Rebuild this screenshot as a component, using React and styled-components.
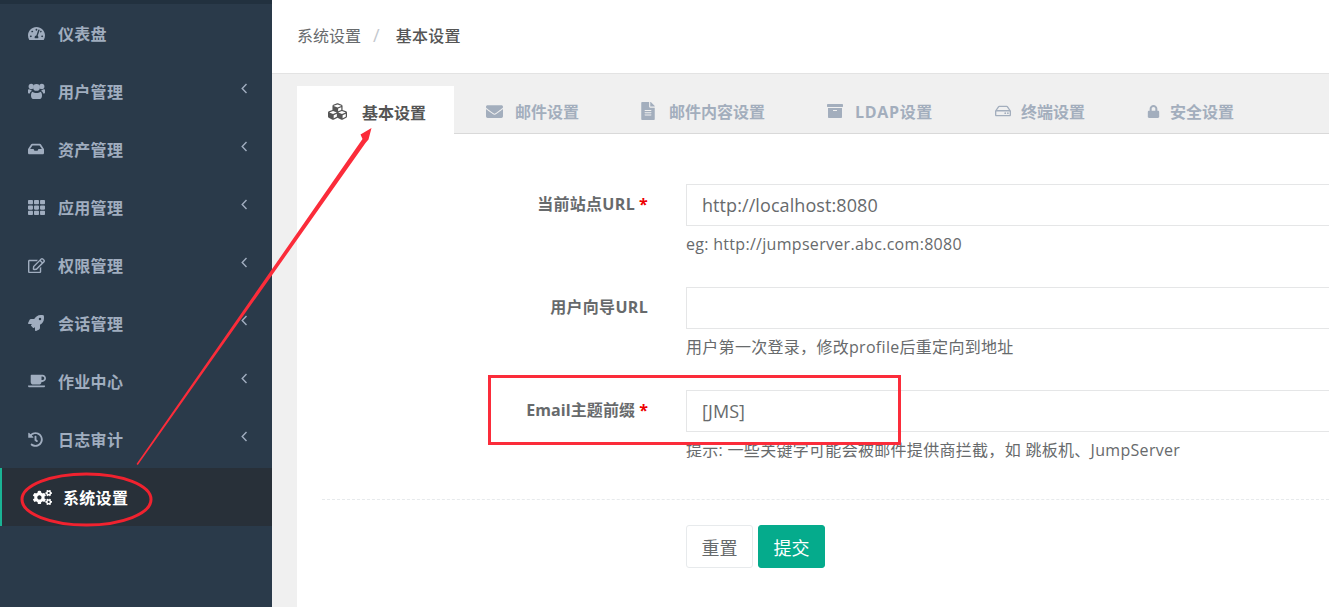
import styled, { createGlobalStyle } from "styled-components";
import {
  FaTachometerAlt, FaInbox, FaTh, FaRegEdit, FaRocket, FaCoffee, FaHistory, FaCogs,
  FaCubes, FaEnvelope, FaFileAlt, FaArchive, FaRegHdd, FaLock,
} from "react-icons/fa";

const GlobalStyle = createGlobalStyle`
  html, body {
    margin: 0;
    padding: 0;
    background: #f0f0f0;
  }
  body {
    font-family: "Open Sans", "Noto Sans CJK SC", sans-serif;
    color: #676a6c;
  }
  * { box-sizing: border-box; }
`;

const Page = styled.div`
  position: relative;
  display: flex;
  width: 1329px;
  height: 607px;
  overflow: hidden;
`;

const Sidebar = styled.nav`
  flex: 0 0 272px;
  background: #2a3a4a;
  border-top: 4px solid #22313f;
`;

const NavRow = styled.div`
  display: flex;
  align-items: center;
  height: 58px;
  padding-left: ${(p) => (p.$active ? "31px" : "28px")};
  border-left: ${(p) => (p.$active ? "2px solid #1ab394" : "none")};
  background: ${(p) => (p.$active ? "#283039" : "transparent")};
  color: ${(p) => (p.$active ? "#ffffff" : "#a0adbf")};
  font-size: 16px;
  font-weight: 700;
`;

const NavIcon = styled.span`
  display: flex;
  align-items: center;
  width: 30px;
  font-size: ${(p) => p.$size || 17}px;
`;

const NavLabel = styled.span`
  flex: 1;
  letter-spacing: 0.3px;
`;

const Chevron = styled.svg`
  width: 7px;
  height: 11px;
  margin: -6px 24px 0 0;
  fill: none;
  stroke: #a0adbf;
  stroke-width: 1.4;
`;

const Main = styled.main`
  flex: 1;
  min-width: 0;
`;

const Header = styled.header`
  display: flex;
  align-items: center;
  height: 74px;
  padding: 0 25px 4px;
  background: #fff;
  border-bottom: 1px solid #e3e3e3;
  font-size: 16px;
`;

const Crumb = styled.span`
  font-weight: ${(p) => (p.$strong ? 500 : 400)};
  color: ${(p) => (p.$strong ? "#555" : "#676a6c")};
  letter-spacing: ${(p) => (p.$strong ? "0.25px" : "0")};
`;

const Slash = styled.span`
  margin: 0 16px 0 12px;
  font-size: 18px;
  color: #c4c8ce;
`;

const Content = styled.div`
  padding: 12px 0 0 25px;
`;

const Tabs = styled.div`
  display: flex;
  height: 48px;
  border-bottom: 1px solid #d9d9d9;
`;

const Tab = styled.div`
  display: flex;
  align-items: center;
  height: ${(p) => (p.$active ? "48px" : "47px")};
  padding: ${(p) => (p.$active ? "3px 28px 0 31px" : "3px 30px 0 32px")};
  background: ${(p) => (p.$active ? "#fff" : "transparent")};
  color: ${(p) => (p.$active ? "#555" : "#a3aebd")};
  font-size: 16px;
  font-weight: 700;
`;

const TabIcon = styled.span`
  display: flex;
  margin-left: ${(p) => p.$shift || 0}px;
  margin-right: ${(p) => p.$gap}px;
  font-size: ${(p) => p.$size}px;
`;

const TabLabel = styled.span`
  letter-spacing: ${(p) => p.$spacing || 0}px;
`;

const Panel = styled.div`
  height: 473px;
  margin-right: -20px;
  padding: 50px 0 0 25px;
  background: #fff;
`;

const FormRow = styled.div`
  display: flex;
  height: 103px;
`;

const Label = styled.label`
  flex: 0 0 326px;
  padding-top: 8px;
  text-align: right;
  font-size: 16px;
  font-weight: 700;
  line-height: 24px;
  letter-spacing: ${(p) => p.$spacing}px;
`;

const Star = styled.span`
  margin-left: 4px;
  color: #ed0000;
`;

const Field = styled.div`
  flex: 1;
  margin-left: 38px;
`;

const Input = styled.div`
  height: 42px;
  padding: 0 15px;
  border: 1px solid #e5e6e7;
  font-size: 18px;
  line-height: 40px;
  letter-spacing: 0.08px;
`;

const Help = styled.div`
  margin-top: 6px;
  font-size: 16px;
  line-height: 24px;
  letter-spacing: 0.3px;
`;

const Divider = styled.div`
  margin-top: 6px;
  border-top: 1px dashed #e7eaec;
`;

const Actions = styled.div`
  display: flex;
  gap: 5px;
  margin: 25px 0 0 364px;
`;

const Button = styled.button`
  width: 67px;
  height: 43px;
  padding: 0;
  border: 1px solid ${(p) => (p.$primary ? "#05ab8c" : "#e7eaec")};
  border-radius: 3px;
  background: ${(p) => (p.$primary ? "#05ab8c" : "#fff")};
  color: ${(p) => (p.$primary ? "#fff" : "#676a6c")};
  font-family: inherit;
  font-size: 18px;
`;

const Annotations = styled.svg`
  position: absolute;
  inset: 0;
  pointer-events: none;
`;

// three heads over three shoulders, the set has no icon of this shape
const GroupIcon = () => (
  <svg width="17" height="16" viewBox="0 0 17 16" fill="currentColor">
    <circle cx="3.2" cy="3.4" r="2.6" />
    <circle cx="13.8" cy="3.4" r="2.6" />
    <circle cx="8.5" cy="4.4" r="3.4" />
    <path d="M0 7.2C0 6.4.6 6 1.4 6.2c.6.4 1.2.6 2 .5-.1.5.1 1 .3 1.4C2.6 8.500 2 9.500 1.800 10.500H.8C.3 10.500 0 10.200 0 9.700Z" />
    <path d="M17 7.200C17 6.400 16.400 6 15.600 6.200c-.6.4-1.200.6-2 .5.1.5-.1 1-.3 1.400 1.100.4 1.700 1.400 1.900 2.400h1c.5 0 .8-.3.8-.8Z" />
    <path d="M4.800 8.700c.9 1.100 2.300 1.400 3.700 1.400s2.800-.3 3.700-1.400c1.300.3 1.800 2 1.800 3.800 0 1.900-.8 3.500-2.200 3.500H5.200C3.800 16 3 14.400 3 12.500c0-1.800.5-3.500 1.800-3.800Z" />
  </svg>
);

const navItems = [
  { label: "仪表盘", icon: <FaTachometerAlt /> },
  { label: "用户管理", icon: <GroupIcon />, more: true },
  { label: "资产管理", icon: <FaInbox />, size: 16, more: true },
  { label: "应用管理", icon: <FaTh />, more: true },
  { label: "权限管理", icon: <FaRegEdit />, more: true },
  { label: "会话管理", icon: <FaRocket />, size: 16, more: true },
  { label: "作业中心", icon: <FaCoffee />, size: 18, more: true },
  { label: "日志审计", icon: <FaHistory />, size: 15, more: true },
  { label: "系统设置", icon: <FaCogs />, size: 19, active: true },
];

const tabs = [
  { label: "基本设置", icon: <FaCubes />, size: 19, gap: 15, active: true },
  { label: "邮件设置", icon: <FaEnvelope />, size: 17, gap: 12 },
  { label: "邮件内容设置", icon: <FaFileAlt />, size: 18, gap: 12, shift: -2 },
  { label: "LDAP设置", icon: <FaArchive />, size: 16, gap: 12, spacing: 0.67 },
  { label: "终端设置", icon: <FaRegHdd />, size: 16, gap: 10 },
  { label: "安全设置", icon: <FaLock />, size: 13, gap: 10 },
];

const fields = [
  { label: "当前站点URL", spacing: 0.3, required: true, value: "http://localhost:8080", help: "eg: http://jumpserver.abc.com:8080" },
  { label: "用户向导URL", spacing: 0.3, value: "", help: "用户第一次登录，修改profile后重定向到地址" },
  { label: "Email主题前缀", spacing: 0.1, required: true, value: "[JMS]", help: "提示: 一些关键字可能会被邮件提供商拦截，如 跳板机、JumpServer" },
];

export default function App() {
  return (
    <Page>
      <GlobalStyle />
      <Sidebar>
        {navItems.map((item) => (
          <NavRow key={item.label} $active={item.active}>
            <NavIcon $size={item.size}>{item.icon}</NavIcon>
            <NavLabel>{item.label}</NavLabel>
            {item.more && (
              <Chevron viewBox="0 0 7 11">
                <polyline points="5.500,1 1.200,5.500 5.500,10" />
              </Chevron>
            )}
          </NavRow>
        ))}
      </Sidebar>
      <Main>
        <Header>
          <Crumb>系统设置</Crumb>
          <Slash>/</Slash>
          <Crumb $strong>基本设置</Crumb>
        </Header>
        <Content>
          <Tabs>
            {tabs.map((tab) => (
              <Tab key={tab.label} $active={tab.active}>
                <TabIcon $size={tab.size} $gap={tab.gap} $shift={tab.shift}>{tab.icon}</TabIcon>
                <TabLabel $spacing={tab.spacing}>{tab.label}</TabLabel>
              </Tab>
            ))}
          </Tabs>
          <Panel>
            {fields.map((field) => (
              <FormRow key={field.label}>
                <Label $spacing={field.spacing}>
                  {field.label}
                  {field.required && <Star>*</Star>}
                </Label>
                <Field>
                  <Input>{field.value}</Input>
                  <Help>{field.help}</Help>
                </Field>
              </FormRow>
            ))}
            <Divider />
            <Actions>
              <Button>重置</Button>
              <Button $primary>提交</Button>
            </Actions>
          </Panel>
        </Content>
      </Main>
      <Annotations width="1329" height="607" viewBox="0 0 1329 607">
        <rect x="489.500" y="376.500" width="410" height="67" fill="none" stroke="#fb2c3a" strokeWidth="3" />
        <ellipse cx="86.500" cy="499.500" rx="64.500" ry="25.500" fill="none" stroke="#f0222f" strokeWidth="3" />
        <polygon points="136.500,464 137.800,465 365.500,143 368.500,139.500 371.500,128 360.500,134.500 362.500,139" fill="#fb2c3a" />
      </Annotations>
    </Page>
  );
}
